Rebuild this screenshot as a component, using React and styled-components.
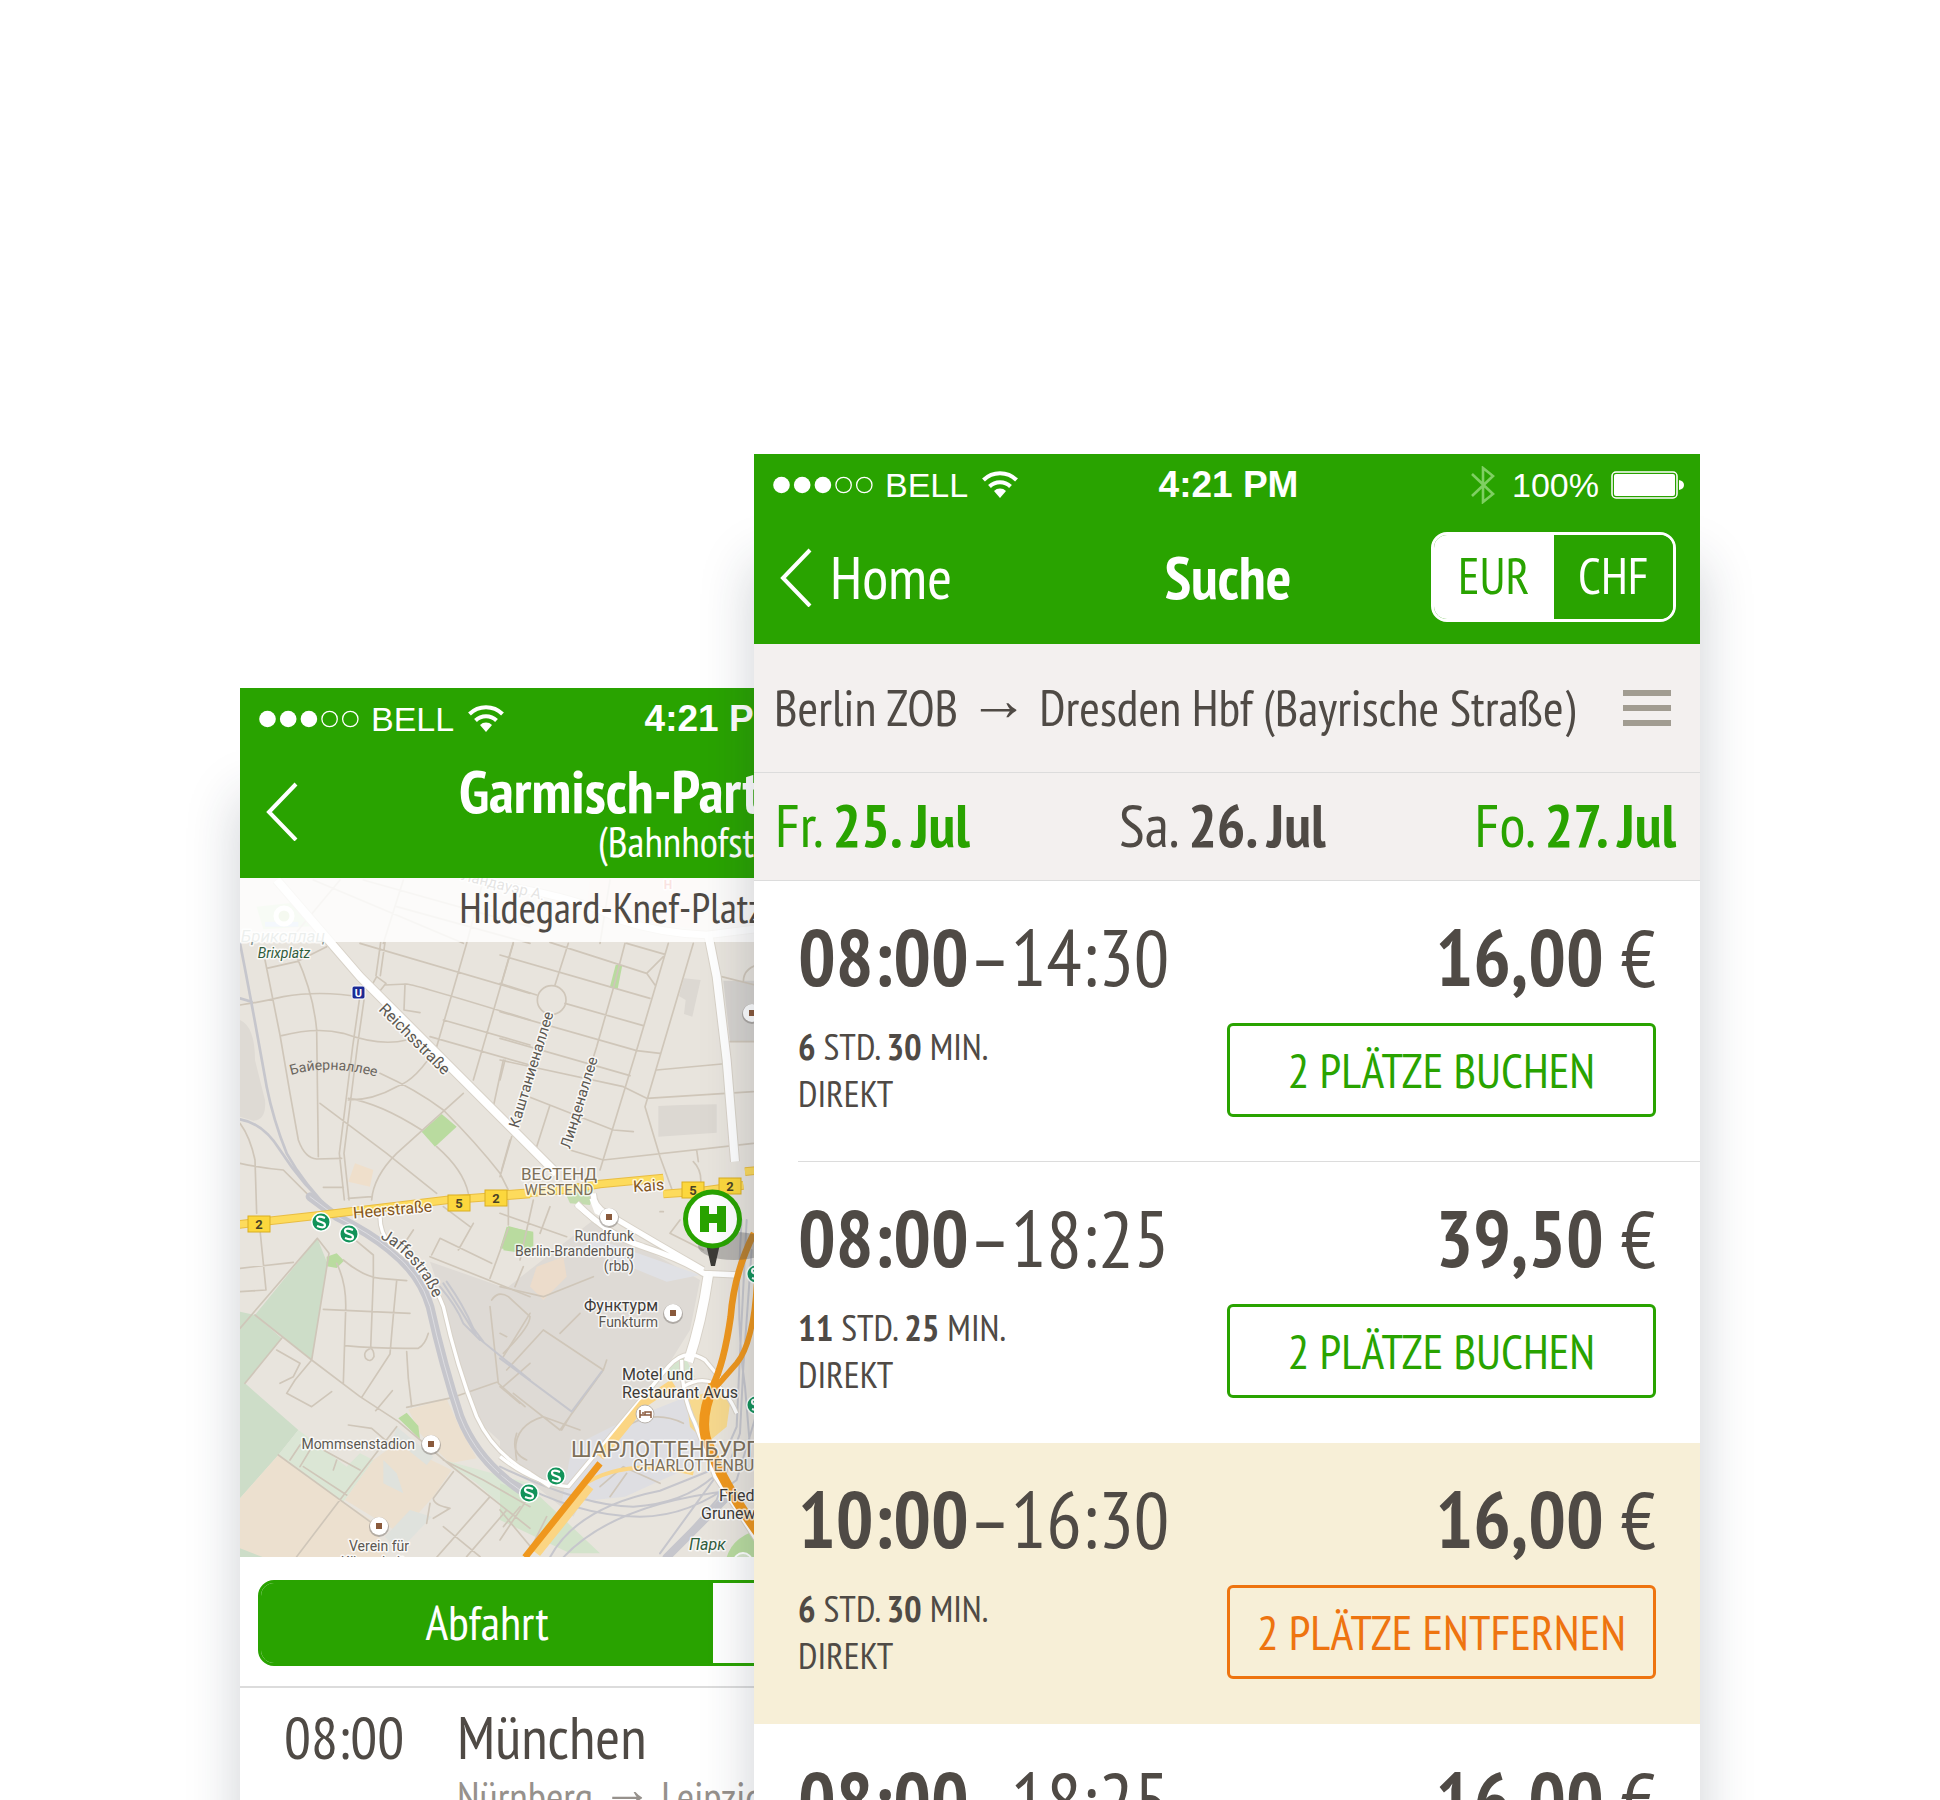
import React from "react";
import styled, { createGlobalStyle } from "styled-components";

const GREEN = "#29a300";
const INK = "#4f4a45";
const RULE = "#dcdcdc";
const NARROW = '"PT Sans Narrow", "Liberation Sans", sans-serif';
const SYSTEM = '"Liberation Sans", sans-serif';

const GlobalStyle = createGlobalStyle`
  *, *::before, *::after { box-sizing: border-box; }
  body { margin: 0; background: #fff; color: ${INK}; font-family: ${NARROW}; }
  button { margin: 0; padding: 0; border: 0; background: none; color: inherit; font: inherit; cursor: pointer; }
`;

const Stage = styled.main`
  display: grid;
  grid-template-columns: 240fr 514fr 432fr 514fr 240fr;
  grid-template-rows: 100%;
  height: 100vh;
  overflow: hidden;
`;

const Phone = styled.section`
  grid-row: 1;
  grid-column: ${(p) => (p.$front ? "3 / 5" : "2 / 4")};
  z-index: ${(p) => (p.$front ? 1 : 0)};
  min-width: 0;
  min-height: 1400px;
  margin-top: ${(p) => (p.$front ? 454 : 688)}px;
  background: #fff;
  box-shadow: 0 110px 50px rgba(30, 45, 65, 0.22);
`;

const Header = styled.header`
  background: ${GREEN};
  color: #fff;
`;

const StatusRow = styled.div`
  display: grid;
  grid-template-columns: 1fr auto 1fr;
  align-items: center;
  height: 62px;
  padding: 0 16px 0 19px;
  font-family: ${SYSTEM};
  font-size: 34px;
  line-height: 40px;
`;

const StatusGroup = styled.div`
  display: flex;
  align-items: center;
  justify-content: ${(p) => (p.$end ? "flex-end" : "flex-start")};
  gap: 12px;
`;

const Clock = styled.time`
  font-size: 37px;
  font-weight: 700;
`;

const NavRow = styled.div`
  display: grid;
  grid-template-columns: 1fr auto 1fr;
  align-items: center;
  height: 128px;
  padding: 0 24px 6px 26px;
`;

const BackButton = styled.button`
  display: flex;
  align-items: center;
  gap: 18px;
  font-size: 60px;
  line-height: 64px;
`;

const Title = styled.h1`
  margin: 0;
  font-size: 60px;
  line-height: 62px;
  font-weight: 700;
  text-align: center;
`;

const Heading = styled.div`
  display: flex;
  flex-direction: column;
`;

const Subtitle = styled.p`
  margin: 0;
  font-size: 42px;
  line-height: 40px;
  text-align: center;
  white-space: nowrap;
`;

const Segments = styled.div`
  display: flex;
  height: 86px;
  overflow: hidden;
  border: 3px solid ${GREEN};
  border-radius: 16px;
  font-size: 48px;
  line-height: 56px;
`;

const CurrencySegments = styled(Segments)`
  justify-self: end;
  width: 245px;
  height: 90px;
  border-color: #fff;
  font-size: 50px;
`;

const Segment = styled.button`
  flex: 1;
  padding-bottom: 2px;
  color: ${(p) => (p.$active ? p.$paper : p.$color)};
  background: ${(p) => (p.$active ? p.$color : p.$paper)};
`;

const RouteBar = styled.div`
  display: flex;
  align-items: center;
  justify-content: space-between;
  height: 129px;
  padding: 0 29px 0 20px;
  background: #f3f0ef;
  border-bottom: 1px solid ${RULE};
  font-size: 50px;
  line-height: 56px;
  white-space: nowrap;
`;

const Arrow = styled.span`
  font-family: ${SYSTEM};
  font-size: 1.2em;
  line-height: 0;
  vertical-align: 6px;
`;

const MenuButton = styled.button`
  display: flex;
  flex-direction: column;
  gap: 9px;
  width: 48px;
`;

const MenuLine = styled.span`
  height: 6px;
  background: #a19c91;
`;

const DateBar = styled.nav`
  display: flex;
  align-items: center;
  justify-content: space-between;
  height: 108px;
  padding: 0 24px 4px 21px;
  background: #f3f0ef;
  border-bottom: 1px solid ${RULE};
`;

const DateButton = styled.button`
  font-size: 60px;
  line-height: 64px;
  color: ${(p) => (p.$current ? INK : GREEN)};
`;

const TripList = styled.ul`
  margin: 0;
  padding: 0;
  list-style: none;
`;

const Trip = styled.li`
  padding-left: 44px;
  background: ${(p) => (p.$selected ? "#f7efd7" : "transparent")};
`;

const TripBody = styled.div`
  display: grid;
  grid-template-columns: 1fr 429px;
  row-gap: 24px;
  height: 281px;
  padding: 35px 44px 44px 0;
  border-bottom: 1px solid ${(p) => (p.$ruled ? RULE : "transparent")};
`;

const Times = styled.div`
  font-size: 79px;
  line-height: 82px;
  white-space: nowrap;
`;

const Price = styled(Times)`
  text-align: right;
`;

const Facts = styled.p`
  margin: 0;
  font-size: 37px;
  line-height: 47px;
`;

const BookButton = styled.button`
  height: 94px;
  border: 3px solid ${(p) => p.$color};
  border-radius: 6px;
  color: ${(p) => p.$color};
  font-size: 48px;
  line-height: 56px;
  white-space: nowrap;
`;

const MapArea = styled.div`
  display: grid;
  height: 679px;
  overflow: hidden;
`;

const MapDrawing = styled.svg`
  grid-area: 1 / 1;
  width: 946px;
  height: 679px;
  font-family: Roboto, sans-serif;
`;

const MapCaption = styled.p`
  grid-area: 1 / 1;
  align-self: start;
  z-index: 1;
  height: 64px;
  margin: 0;
  background: rgba(255, 255, 255, 0.84);
  font-size: 42px;
  line-height: 60px;
  text-align: center;
  white-space: nowrap;
`;

const ModeBar = styled.div`
  padding: 23px 18px 20px;
  border-bottom: 2px solid ${RULE};
`;

const Departure = styled.div`
  display: grid;
  grid-template-columns: 173px 1fr;
  row-gap: 4px;
  padding: 17px 44px;
  font-size: 60px;
  line-height: 64px;
`;

const Via = styled.div`
  grid-column: 2;
  color: #96918c;
  font-size: 42px;
  line-height: 48px;
`;

const Chevron = () => (
  <svg width="32" height="60" viewBox="0 0 32 60" fill="none" stroke="#fff" strokeWidth="4" aria-hidden="true">
    <path d="M30 3 3 31l27 28" />
  </svg>
);

const Signal = () => (
  <svg width="100" height="18" viewBox="0 0 100 18" aria-hidden="true">
    {[0, 1, 2, 3, 4].map((i) => (
      <circle key={i} cx={8.5 + i * 20.7} cy="9" r={i < 3 ? 8.3 : 7.7} fill={i < 3 ? "#fff" : "none"} stroke="#fff" strokeWidth={i < 3 ? 0 : 1.3} />
    ))}
  </svg>
);

const Wifi = () => (
  <svg width="38" height="28" viewBox="0 0 38 28" fill="none" stroke="#fff" strokeWidth="4" aria-hidden="true">
    <g transform="translate(2 0)">
      <path d="M1.500 9a23.500 23.500 0 0 1 33 0" />
      <path d="M7.500 15.500a15 15 0 0 1 21 0" />
      <path d="M12 20a8.500 8.500 0 0 1 12 0l-6 7z" fill="#fff" stroke="none" />
    </g>
  </svg>
);

const Bluetooth = () => (
  <svg width="29" height="38" viewBox="0 0 29 38" fill="none" stroke="#7fcf62" strokeWidth="2.600" aria-hidden="true">
    <path d="M1 8l21 20-10 8V2l10 8L1 30" />
  </svg>
);

const Battery = () => (
  <svg width="73" height="28" viewBox="0 0 73 28" aria-hidden="true">
    <rect x="1" y="1" width="65" height="26" rx="4" fill="none" stroke="#fff" strokeWidth="1.500" />
    <rect x="3" y="3" width="61" height="22" rx="2" fill="#fff" />
    <path d="M68 9q5 1 5 5t-5 5z" fill="#fff" />
  </svg>
);

const StatusBar = () => (
  <StatusRow>
    <StatusGroup>
      <Signal />
      <span>BELL</span>
      <Wifi />
    </StatusGroup>
    <Clock>4:21 PM</Clock>
    <StatusGroup $end>
      <Bluetooth />
      <span>100%</span>
      <Battery />
    </StatusGroup>
  </StatusRow>
);

/* The map is drawn in four tiles, each on a grid three times finer than the page. */
const TILES = { nw: [-10, -18], ne: [260, -18], sw: [-10, 322], se: [260, 322] };
const Tile = ({ at, children }) => (
  <g transform={`translate(${TILES[at].join(" ")}) scale(${1 / 3})`}>{children}</g>
);

const Label = ({ x, y, size = 15, turn = 0, anchor = "middle", color = "#5c5852", weight = 400, italic, children }) => (
  <text
    x={x}
    y={y}
    transform={turn ? `rotate(${turn} ${x} ${y})` : undefined}
    textAnchor={anchor}
    fontSize={size}
    fontWeight={weight}
    fontStyle={italic ? "italic" : undefined}
    fill={color}
    stroke="#fff"
    strokeOpacity="0.75"
    strokeWidth="3"
    strokeLinejoin="round"
    paintOrder="stroke"
  >
    {children}
  </text>
);

const Poi = ({ x, y }) => (
  <g>
    <circle cx={x} cy={y + 1} r="10" fill="#8f8b86" opacity="0.6" />
    <circle cx={x} cy={y} r="9" fill="#fff" />
    <rect x={x - 3} y={y - 3} width="6" height="6" fill="#8a5a3c" />
  </g>
);

const SBahn = ({ x, y }) => (
  <g>
    <circle cx={x} cy={y} r="10" fill="#fff" />
    <circle cx={x} cy={y} r="8.500" fill="#12935a" />
    <path d={`M${x + 4} ${y - 4}q-8-3-8 1q0 2 4 3t4 3q0 4-8 1`} fill="none" stroke="#fff" strokeWidth="2.200" />
  </g>
);

const Shield = ({ x, y, children }) => (
  <g>
    <rect x={x - 11} y={y - 8} width="22" height="16" fill="#fcd73d" stroke="#d9ae22" />
    <text x={x} y={y + 5} textAnchor="middle" fontSize="13" fontWeight="700" fill="#4a4326">{children}</text>
  </g>
);

const CityMap = () => (
  <MapDrawing viewBox="0 0 946 679" aria-label="Karte">
    <defs>
      <path id="jaffe" d="M140 360Q178 381 197 428" />
      <path id="bayern" d="M51 197Q94 184 150 203" />
    </defs>
    <rect width="946" height="679" fill="#e8e4dd" />

    <Tile at="nw">
      <path d="M80 140l110-12 60 70-150 10z" fill="#cfe3bd" />
      <path d="M105 185h100v15H105z" fill="#bcd0ee" />
      <path d="M30 480q45 20 45 120l30 120q5 60-35 62l-40-12z" fill="#dedad4" />
      <path d="M575 815l60-53 45 38-65 60z" fill="#b9db9f" />
      <path d="M375 910l55 20-10 50-65-15z" fill="#efdfcb" />
    </Tile>
    <Tile at="ne">
      <path d="M270 60h330v150L260 150z" fill="#f2dcd9" />
      <path d="M670 362h120v183H690z" fill="#d6d3cf" />
      <path d="M552 355l50 5-25 110-25-8 5-42-20-12zM475 738l70-3 105-2v85l-175 12z" fill="#dcd8d2" />
      <path d="M347 315h20l-14 72-24-4z" fill="#b9db9f" />
      <path d="M185 975l100 5-15 55-60-5z" fill="#c3dcae" />
    </Tile>
    <Tile at="sw">
      <path d="M262 115l30 75-47 290L75 345z" fill="#cdddc8" />
      <path d="M30 335l45 10 80 70L45 550l160 140-60 75L30 895z" fill="#cdddc8" />
      <path d="M205 690l-60 75 195 140 90-125-40-20-40 40z" fill="#dbe6d5" />
      <path d="M145 765l195 140 90 60 40 107H30V895z" fill="#ece0cf" />
      <path d="M30 1045l70 27H30z" fill="#cdddc8" />
      <path d="M430 780l70-50 165 80-55 80-100 110-165-100z" fill="#ece0cf" />
      <path d="M535 628l115-31 38 83 52 95-80 15-90-90z" fill="#ece0cf" />
      <path d="M505 655l25-17 35 40 5 40zM290 170l30-10 22 22-22 22-30-5z" fill="#b9db9f" />
      <path d="M600 185l300 105v515L740 660 680 500 640 300z" fill="#dedad5" />
      <path d="M640 780l260 70v140L740 850z" fill="#dbe6d5" />
      <path d="M540 930l65 20-100 105-40-45zM460 780l40 40 20 60-60-30zM500 680l110 90-20 25-100-80z" fill="#dfe2dd" />
      <path d="M835 78l75 20v65l-90-12z" fill="#b9db9f" />
    </Tile>
    <Tile at="se">
      <path d="M0 280l280-220 320 180-30 150-150 240-90 120-110 200L0 770z" fill="#dedad5" />
      <path d="M20 80l80 15-15 65-85-15z" fill="#b9db9f" />
      <path d="M110 200l80-30 10 60-70 70-40-40z" fill="#ecdccb" />
      <path d="M300 120l300 105-100 20-260-105z" fill="#e0e1e5" />
      <path d="M215 740l120-60 250-100 40 200-140 60-110 50-190 20z" fill="#dedee2" />
      <path d="M0 850l120 40 180 170h-90L0 960z" fill="#d3e3cb" />
      <path d="M505 500l50-30 30 60-80 20z" fill="#d5e5ce" />
      <path d="M560 600l100-40 30 50-10 70-60 50-50-50z" fill="#f7d98e" />
      <path d="M680 1072q20-70 120-90v90z" fill="#b9db9f" />
    </Tile>

    <g fill="none" stroke="#cfc6b9" strokeLinecap="round" strokeLinejoin="round">
      <Tile at="nw">
        <path
          strokeWidth="5"
          d="M105 300l45 225 30 175 25 140q20 55 55 57l75-2M200 290q50 110 60 220l5 380M110 325l90-20 90-45M30 435q70-10 130-25 110-20 240 2M155 527q105-27 185-7 110 40 190 20M388 420l-20 140-20 160-20 160 15 140M402 420l-20 140-20 160-20 160 15 140M452 247l-14 100M465 247l-14 100M440 350l28 20-20 25-25-15zM465 375l65-3q30 3 370 108M525 372l-3 78 48 8M390 250l510 150M710 250l-90 310q-60 100-120 120-70 40-145 40M850 247L730 660M640 480l260 75M600 530l300 85M450 640q110 50 190 110 100 100 170 190l30 60M355 715q95 15 220 95M700 700L500 880q-70 70-75 140M270 730l200 150 150 120M620 860q80 70 95 140M820 600l-30 140M845 830l-35 120M30 790q30 40 45 110l5 160M30 910q70 15 130 20l110 110M280 982h60M355 1015l70-5M250 60l450 190M330 60L180 240M520 60l-60 190M760 60l-50 190M500 140l400 110M400 60l500 140"
        />
      </Tile>
      <Tile at="ne">
        <path
          strokeWidth="5"
          d="M0 285l450 130M0 370l110 35M195 430l235 67M0 455l410 117 70 8M0 535l390 112M0 600l370 80 70 35 320-20M150 247l290 93 50-50M440 340l25 35M380 250l115 33M40 250L5 370M205 250l-40 125M375 250l-35 135-50 175-90 290M505 250l-95 320-110 360M580 250L435 740l45 150 40 110M470 630l195-18M90 712l250 98 60 5M150 735l-40 125M15 600L0 660M210 870l100 30 450-50M590 870l5 35M580 905q30 30 20 80M665 350l100 25M790 310q-60 10-60 55M30 840L5 930M150 1040l-30 80M690 545h80M330 60l-30 190"
        />
        <circle cx="155" cy="420" r="43" strokeWidth="5" />
      </Tile>
      <Tile at="sw">
        <path
          strokeWidth="5"
          d="M262 115L30 385M262 115l35 45-52 320M75 345l170 135 145 110 115 75 155 130 240 190M90 90l18 180-78 5M30 205l160-18M155 415L45 550M320 190q30 60 27 140l-7 220M340 180q60 50 110 55l80 7M430 235v-70l-60-50M430 235l-8 210q-25 10-15 30 15 15 25-5 0-20-10-25M500 242q-10 100-20 220l-85 130M280 328l260 12M345 437q100 10 220 8 20-10 30-45M530 455l5 80 10 85M140 450l70 40M245 480l-50 60-25 40 75 40 60-45M487 572l-50 60M210 490l-20 40-40 20M530 622l140-30 130-45M145 765l275 200M210 735l-30 45M240 750l-30 50M220 800l130 85M280 750l110 60M320 780l-10 30M500 680l-140 180-160 210M355 675l70 10 70 60M640 780l120 60 140 80M670 815l-60 80q0 20 50 30l-50 30M600 910l-10 60M780 890L620 1072M830 930l-120 140M890 900l-80 120M640 980l110 90M600 170l300 120M605 165l25-50 155 75M730 70l-45 80M780 235l55-150M550 90l-20 30M880 200l-25 60M835 75V0M720 80l-80-60M785 300q20-30 50-10l65 60q0 30-80 110M780 320l25 230 80 70M900 490l-80 70M860 700q-20 60 30 80"
        />
      </Tile>
      <Tile at="se">
        <path
          strokeWidth="5"
          d="M0 40l200 70M100 0L60 180M0 260l130 30 150-60M90 340L10 470M0 400l20 10M130 390l180 120-130 180-140-110M130 390l-110 120M310 510l10-30M215 640l-30 50M0 560l60 50M50 780q-20-100 80-130l110 40M300 860l70-60 110 50M330 890l50-70M350 700q100-80 200-30M180 400l60-60M480 35h10M540 60l-30 40 100 50M0 930l100 120M60 920l-50 60M140 950l-60 120"
        />
      </Tile>
    </g>

    <g fill="none" stroke="#c6c6cc" strokeLinecap="round">
      <Tile at="nw">
        <path strokeWidth="8" d="M30 250q30 150 80 430 20 100 60 200M30 415l35 10M30 778q70 12 120 92 70 110 160 185M170 880q50 90 140 180" />
      </Tile>
      <Tile at="sw">
        <path strokeWidth="26" d="M240-10l80 60q100 50 160 100 90 70 120 170 40 180 90 330 50 130 180 220" />
        <path strokeWidth="2" stroke="#e9e9ec" d="M240-10l80 60q100 50 160 100 90 70 120 170 40 180 90 330 50 130 180 220" />
        <path strokeWidth="6" d="M640 250q60 90 100 160l160 130M650 245q50 70 80 140l30 40M630 260q50 60 70 110l50 50" />
      </Tile>
      <Tile at="se">
        <path strokeWidth="6" d="M0 475l215 160 90-120M0 820q220 130 420 130 150 0 290-110l60-200M0 800q250 120 400 120 150-10 240-90M150 1072q80-150 330-200l200-80M190 1072q150-160 500-200M740 60l-20 400-10 220-70 160-160 220M755 150l-25 350-10 200-70 200-150 170M725 60q-20 300 10 500l20 240" />
        <path strokeWidth="24" d="M500 1072l130-130 60-60" />
      </Tile>
    </g>

    <g fill="none" strokeLinejoin="round">
      {[["#d8d2c8", 6], ["#fff", 0]].map(([stroke, extra]) => (
        <g key={stroke} stroke={stroke}>
          <Tile at="nw">
            <path strokeWidth={24 + extra} d="M140 60l250 290 310 310 240 240 40 40" />
          </Tile>
          <Tile at="ne">
            <path strokeWidth={24 + extra} d="M625 225l25 125 30 250 25 305" />
            <path strokeWidth={20 + extra} d="M-40 70q280 40 400 110 120 40 260 45l160-20" />
          </Tile>
          <Tile at="sw">
            <path strokeWidth={10 + extra} d="M450 50q0 50 30 80 130 100 160 190 40 180 100 330 50 110 160 170l60 40" />
          </Tile>
          <Tile at="se">
            <path strokeWidth={16 + extra} d="M230 10q100 100 200 130 120 40 180 80l105 5M280-20q0 40 40 60 150 90 290 170" />
            <path strokeWidth={28 + extra} d="M625 225q-20 140-60 260" />
            <path strokeWidth={10 + extra} d="M0 770q100 80 205 90l300-360q50-60 110-20l50 60M545 480q0 110 40 190l60 160 130 200M550 560q100-60 160 80" />
          </Tile>
        </g>
      ))}
      <Tile at="se">
        <path stroke="#fbd583" strokeWidth="26" d="M300 770l130-160 90-60M110 1060l160-200" />
        <path stroke="#fbd583" strokeWidth="12" d="M240 860q130-90 340-40" />
        <path stroke="#ef971d" strokeWidth="20" d="M300 790L75 1072M762 100q-60 120-70 250-20 140-55 210" />
        <path stroke="#ef971d" strokeWidth="17" d="M770 250q-10 180-60 240l-70 80" />
        <path stroke="#ef971d" strokeWidth="30" d="M640 555q-50 120-10 190 40 110 150 260" />
      </Tile>
      {[["#e9bd42", 26], ["#fddb5c", 20]].map(([stroke, width]) => (
        <g key={stroke} stroke={stroke} strokeWidth={width}>
          <Tile at="sw">
            <path d="M20 74l230-26 400-48 250-18" />
          </Tile>
          <Tile at="ne">
            <path d="M0 1005l190-15 110-18 190-18M490 1002l110-8 130-18M735 935l60-6" />
          </Tile>
        </g>
      ))}
      <Tile at="ne">
        <path stroke="#fff" strokeWidth="14" d="M275 1015l15 40 40 20M230 1035l60 50" />
      </Tile>
    </g>

    <circle cx="44" cy="38" r="8" fill="#c3d9a4" stroke="#fff" strokeWidth="5" />
    <Label x={43} y={64} size={17} color="#8b9a92" italic>Бриксплац</Label>
    <Label x={44} y={80} size={14} color="#2f5c3b" italic>Brixplatz</Label>
    <Label x={262} y={12} size={15} turn={14}>Ландауэр А.</Label>
    <Label x={428} y={11} size={12} color="#e0554b" weight={700}>H</Label>
    <rect x="112" y="108" width="13" height="13" rx="2" fill="#1c2a94" stroke="#fff" />
    <text x="118.500" y="119" textAnchor="middle" fontSize="11" fontWeight="700" fill="#fff">U</text>
    <Label x={171} y={165} size={16} turn={45}>Reichsstraße</Label>
    <text fontSize="14" fill="#6b665f"><textPath href="#bayern">Байерналлее</textPath></text>
    <Label x={296} y={193} size={15} turn={-73}>Каштаниеналлее</Label>
    <Label x={344} y={226} size={15} turn={-73}>Линденаллее</Label>
    <Label x={319} y={302} size={17} color="#7d7059">ВЕСТЕНД</Label>
    <Label x={319} y={317} size={15} color="#7d7059">WESTEND</Label>
    <Label x={409} y={313} size={16} turn={-4} color="#85561c">Kais</Label>
    <Label x={153} y={337} size={16} turn={-5} color="#85561c">Heerstraße</Label>
    <text fontSize="16" fill="#5c5852" stroke="#fff" strokeOpacity="0.75" strokeWidth="3" paintOrder="stroke"><textPath href="#jaffe">Jaffestraße</textPath></text>
    <Shield x={19} y={346}>2</Shield>
    <Shield x={219} y={325}>5</Shield>
    <Shield x={256} y={320}>2</Shield>
    <Shield x={453} y={312}>5</Shield>
    <Shield x={490} y={308}>2</Shield>
    <SBahn x={81} y={344} />
    <SBahn x={109} y={356} />
    <SBahn x={289} y={615} />
    <SBahn x={316} y={598} />
    <SBahn x={516} y={396} />
    <SBahn x={516} y={527} />
    <Poi x={369} y={339} />
    <Label x={394} y={363} size={14} anchor="end">Rundfunk</Label>
    <Label x={394} y={378} size={14} anchor="end">Berlin-Brandenburg</Label>
    <Label x={394} y={393} size={14} anchor="end">(rbb)</Label>
    <Poi x={433} y={435} />
    <Label x={418} y={433} size={16} anchor="end" color="#3d3b38">Функтурм</Label>
    <Label x={418} y={449} size={14} anchor="end">Funkturm</Label>
    <Label x={382} y={502} size={16} anchor="start" color="#3d3b38">Motel und</Label>
    <Label x={382} y={520} size={16} anchor="start" color="#3d3b38">Restaurant Avus</Label>
    <circle cx="405" cy="536" r="9" fill="#fff" stroke="#b9b4ad" />
    <path d="M400 532v8m0-3h11v3m0-3v-3h-6v3m-3-2h2" fill="none" stroke="#8a5a3c" strokeWidth="1.500" />
    <Label x={331} y={579} size={22} anchor="start" color="#7d7059">ШАРЛОТТЕНБУРГ</Label>
    <Label x={393} y={593} size={16} anchor="start" color="#7d7059">CHARLOTTENBURG</Label>
    <Label x={479} y={623} size={16} anchor="start" color="#3d3b38">Friedhof</Label>
    <Label x={461} y={641} size={16} anchor="start" color="#3d3b38">Grunewald</Label>
    <Label x={449} y={672} size={16} anchor="start" color="#2f5c3b" italic>Парк</Label>
    <circle cx="503" cy="684" r="9" fill="#d8e6cc" stroke="#fff" strokeWidth="2" />
    <Label x={175} y={571} size={14} anchor="end">Mommsenstadion</Label>
    <Poi x={191} y={566} />
    <Poi x={139} y={648} />
    <Label x={139} y={673} size={14}>Verein für</Label>
    <Label x={139} y={689} size={14}>Körperkultur</Label>
    <Poi x={512} y={135} />

    <ellipse cx="494" cy="368" rx="36" ry="14" fill="#555" opacity="0.35" />
    <path d="M466 366h14l-5 22h-4z" fill="#3c3b38" />
    <circle cx="472.500" cy="341" r="27" fill="#fff" stroke={GREEN} strokeWidth="5" />
    <path d="M460 328h9v8h8v-8h9v26h-9v-9h-8v9h-9z" fill={GREEN} />
  </MapDrawing>
);

const TRIPS = [
  { from: "08:00", to: "14:30", price: "16,00", h: 6, m: 30 },
  { from: "08:00", to: "18:25", price: "39,50", h: 11, m: 25 },
  { from: "10:00", to: "16:30", price: "16,00", h: 6, m: 30, selected: true },
  { from: "08:00", to: "18:25", price: "16,00", h: 11, m: 25 },
];

const StopScreen = () => (
  <Phone>
    <Header>
      <StatusBar />
      <NavRow>
        <BackButton aria-label="Zurück"><Chevron /></BackButton>
        <Heading>
          <Title>Garmisch-Partenkirchen</Title>
          <Subtitle>(Bahnhofstraße)</Subtitle>
        </Heading>
      </NavRow>
    </Header>
    <MapArea>
      <CityMap />
      <MapCaption>Hildegard-Knef-Platz, 10829 Berlin</MapCaption>
    </MapArea>
    <ModeBar>
      <Segments>
        <Segment $active $color={GREEN} $paper="#fff" aria-pressed="true">Abfahrt</Segment>
        <Segment $color={GREEN} $paper="#fff" aria-pressed="false">Ankunft</Segment>
      </Segments>
    </ModeBar>
    <Departure>
      <time>08:00</time>
      <span>München</span>
      <Via>Nürnberg <Arrow>→</Arrow> Leipzig</Via>
    </Departure>
  </Phone>
);

const SearchScreen = () => (
  <Phone $front>
    <Header>
      <StatusBar />
      <NavRow>
        <BackButton><Chevron />Home</BackButton>
        <Title>Suche</Title>
        <CurrencySegments>
          <Segment $active $color="#fff" $paper={GREEN} aria-pressed="true">EUR</Segment>
          <Segment $color="#fff" $paper={GREEN} aria-pressed="false">CHF</Segment>
        </CurrencySegments>
      </NavRow>
    </Header>
    <RouteBar>
      <span>Berlin ZOB <Arrow>→</Arrow> Dresden Hbf (Bayrische Straße)</span>
      <MenuButton aria-label="Menü"><MenuLine /><MenuLine /><MenuLine /></MenuButton>
    </RouteBar>
    <DateBar>
      <DateButton>Fr. <b>25. Jul</b></DateButton>
      <DateButton $current>Sa. <b>26. Jul</b></DateButton>
      <DateButton>Fo. <b>27. Jul</b></DateButton>
    </DateBar>
    <TripList>
      {TRIPS.map((t, i) => (
        <Trip key={i} $selected={t.selected}>
          <TripBody $ruled={i === 0}>
            <Times><b>{t.from}</b>–{t.to}</Times>
            <Price><b>{t.price}</b> €</Price>
            <Facts><b>{t.h}</b> STD. <b>{t.m}</b> MIN.<br />DIREKT</Facts>
            <BookButton $color={t.selected ? "#ee7410" : GREEN}>
              {t.selected ? "2 PLÄTZE ENTFERNEN" : "2 PLÄTZE BUCHEN"}
            </BookButton>
          </TripBody>
        </Trip>
      ))}
    </TripList>
  </Phone>
);

export default function App() {
  return (
    <>
      <GlobalStyle />
      <Stage>
        <StopScreen />
        <SearchScreen />
      </Stage>
    </>
  );
}
